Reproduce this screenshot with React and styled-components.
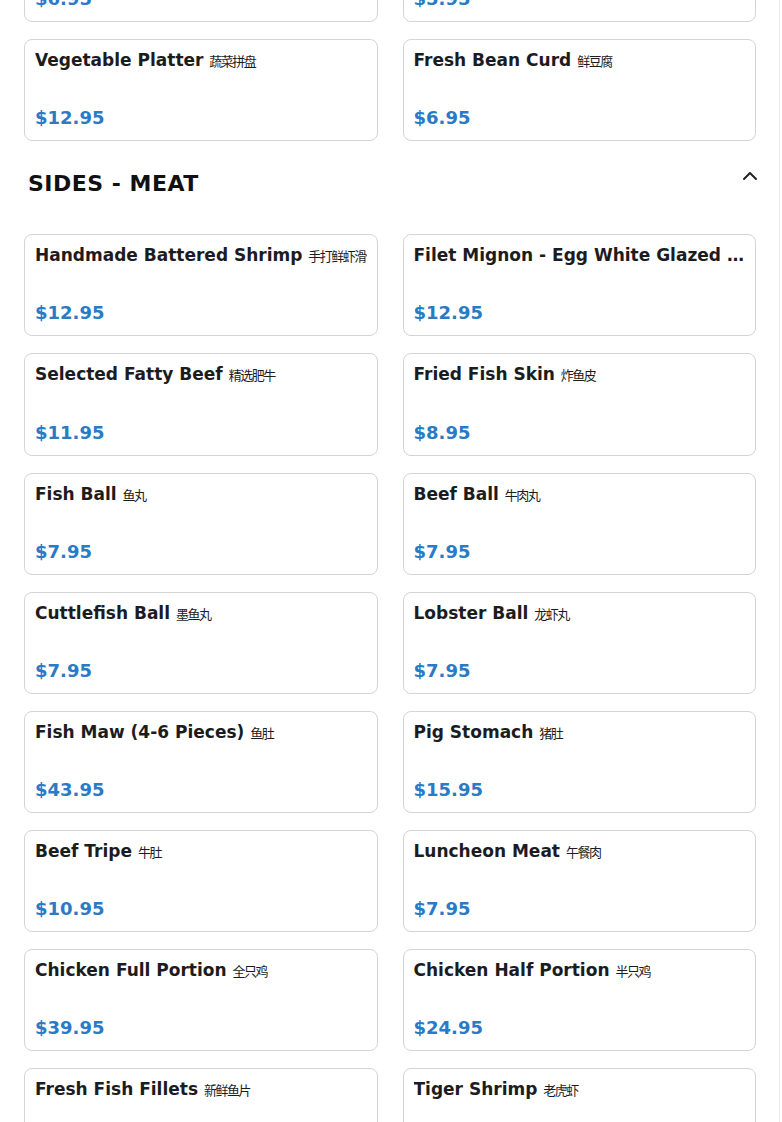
import React from 'react'
import styled, { createGlobalStyle } from 'styled-components'
import { ChevronUp } from 'lucide-react'

const GlobalStyle = createGlobalStyle`
  body {
    margin: 0;
    background: #ffffff;
    font-family: "DejaVu Sans", "Noto Sans CJK SC", sans-serif;
    color: #1c1c1e;
  }
`;

const vegetables = [
  { name: 'Enoki Mushroom', zh: '金针菇', price: '$6.95' },
  { name: 'Napa Cabbage', zh: '大白菜', price: '$5.95' },
  { name: 'Vegetable Platter', zh: '蔬菜拼盘', price: '$12.95' },
  { name: 'Fresh Bean Curd', zh: '鲜豆腐', price: '$6.95' },
];

const meats = [
  { name: 'Handmade Battered Shrimp', zh: '手打鲜虾滑', price: '$12.95' },
  { name: 'Filet Mignon - Egg White Glazed', zh: '蛋清嫩牛肉', price: '$12.95' },
  { name: 'Selected Fatty Beef', zh: '精选肥牛', price: '$11.95' },
  { name: 'Fried Fish Skin', zh: '炸鱼皮', price: '$8.95' },
  { name: 'Fish Ball', zh: '鱼丸', price: '$7.95' },
  { name: 'Beef Ball', zh: '牛肉丸', price: '$7.95' },
  { name: 'Cuttlefish Ball', zh: '墨鱼丸', price: '$7.95' },
  { name: 'Lobster Ball', zh: '龙虾丸', price: '$7.95' },
  { name: 'Fish Maw (4-6 Pieces)', zh: '鱼肚', price: '$43.95' },
  { name: 'Pig Stomach', zh: '猪肚', price: '$15.95' },
  { name: 'Beef Tripe', zh: '牛肚', price: '$10.95' },
  { name: 'Luncheon Meat', zh: '午餐肉', price: '$7.95' },
  { name: 'Chicken Full Portion', zh: '全只鸡', price: '$39.95' },
  { name: 'Chicken Half Portion', zh: '半只鸡', price: '$24.95' },
  { name: 'Fresh Fish Fillets', zh: '新鲜鱼片', price: '$19.95' },
  { name: 'Tiger Shrimp', zh: '老虎虾', price: '$16.95' },
];

const Item = ({ item }) => (
  <Card>
    <Title>
      {item.name} <Zh>{item.zh}</Zh>
    </Title>
    <Price>{item.price}</Price>
  </Card>
);

const App = () => {
  return (
    <>
      <GlobalStyle />
      <Menu>
        <Grid $scrolled>
          {vegetables.map((item) => (
            <Item key={item.name} item={item} />
          ))}
        </Grid>
        <SectionHeader>
          <h2>SIDES - MEAT</h2>
          <Toggle aria-label="Collapse section">
            <ChevronUp size={24} strokeWidth={2} />
          </Toggle>
        </SectionHeader>
        <Grid>
          {meats.map((item) => (
            <Item key={item.name} item={item} />
          ))}
        </Grid>
      </Menu>
    </>
  );
}

export default App

const Menu = styled.div`
  width: 780px;
  min-height: 1122px;
  box-sizing: border-box;
  padding: 0 23px 40px 24px;
  border-right: 1px solid #ececec;
  overflow: hidden;
`;

const Grid = styled.div`
  display: grid;
  grid-template-columns: 1fr 1fr;
  column-gap: 25px;
  row-gap: 17px;
  margin-top: ${(p) => (p.$scrolled ? '-80px' : '0')};
`;

const Card = styled.div`
  height: 102.15px;
  box-sizing: border-box;
  padding: 10px 10px 11px 10px;
  border: 1px solid #d4d4d4;
  border-radius: 8px;
  background: #fff;
  display: flex;
  flex-direction: column;
  justify-content: space-between;
  min-width: 0;
`;

const Title = styled.div`
  font-size: 17px;
  font-weight: bold;
  line-height: 21px;
  color: #1c1c1e;
  white-space: nowrap;
  overflow: hidden;
  text-overflow: ellipsis;
`;

const Zh = styled.span`
  font-size: 13px;
  font-weight: normal;
  letter-spacing: -1.5px;
  color: #1c1c1e;
`;

const Price = styled.div`
  font-size: 18px;
  font-weight: bold;
  line-height: 22px;
  color: #2a7ac6;
`;

const SectionHeader = styled.div`
  display: flex;
  justify-content: space-between;
  align-items: flex-start;
  padding: 27px 0 34px 4px;

  h2 {
    margin: 0;
    font-size: 22px;
    line-height: 32px;
    font-weight: bold;
    letter-spacing: 0.5px;
    color: #111;
  }
`;

const Toggle = styled.button`
  border: none;
  background: transparent;
  padding: 0;
  margin: -4px -6px 0 0;
  color: #222;
  display: flex;
  cursor: pointer;
`;
